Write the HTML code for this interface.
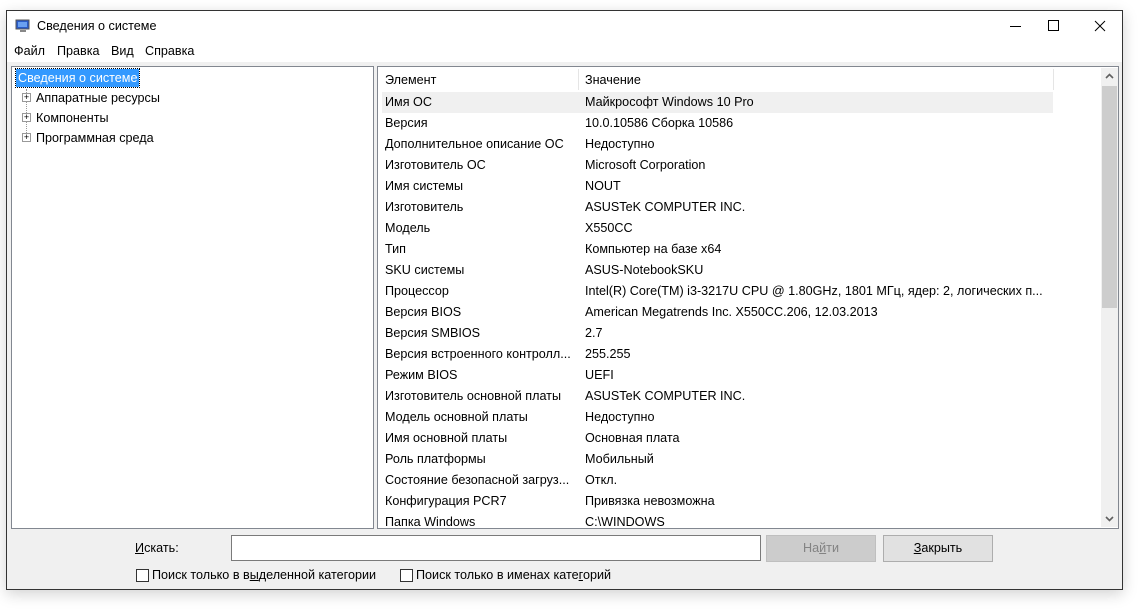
<!DOCTYPE html>
<html><head><meta charset="utf-8"><style>
*{margin:0;padding:0;box-sizing:border-box}
body{width:1144px;height:612px;background:#fff;font-family:"Liberation Sans","DejaVu Sans",sans-serif;font-size:12.6px;color:#000;position:relative;overflow:hidden}
.win{position:absolute;left:6px;top:10px;width:1117px;height:580px;border:1px solid #333;background:#f0f0f0;box-shadow:0 4px 14px rgba(0,0,0,.18)}
.title{position:absolute;left:0;top:0;width:1115px;height:31px;background:#fff}
.menu{position:absolute;left:0;top:31px;width:1115px;height:20px;background:#fff}
.abs{position:absolute;white-space:nowrap}
.lp{position:absolute;left:4px;top:55px;width:363px;height:463px;background:#fff;border:1px solid #828790}
.rp{position:absolute;left:370px;top:55px;width:742px;height:463px;background:#fff;border:1px solid #828790}
.row{position:absolute;left:4px;width:671px;height:21px;line-height:21px}
.row span{position:absolute}
.c1{left:3px}.c2{left:203px}
.u{text-decoration:underline}
.btn{position:absolute;height:27px;line-height:25px;text-align:center;border:1px solid #adadad;background:#e1e1e1}
.cb{position:absolute;width:13px;height:13px;border:1px solid #333;background:#fff}
</style></head><body>
<div class="win">
 <div class="title">
  <svg class="abs" style="left:8px;top:7px" width="16" height="16" viewBox="0 0 16 16"><rect x="1" y="2" width="13" height="9" fill="#2a5bc8" stroke="#555" stroke-width="1"/><rect x="3" y="4" width="9" height="5" fill="#6aa0f0"/><rect x="5" y="12" width="6" height="2" fill="#888"/></svg>
  <div class="abs" style="left:30px;top:8px">Сведения о системе</div>
  <div class="abs" style="left:1003px;top:15px;width:11px;height:1px;background:#000"></div>
  <div class="abs" style="left:1041px;top:9px;width:11px;height:11px;border:1px solid #000"></div>
  <svg class="abs" style="left:1087px;top:9px" width="12" height="12"><path d="M1 1L11 11M11 1L1 11" stroke="#000" stroke-width="1"/></svg>
 </div>
 <div class="menu">
  <div class="abs" style="left:7px;top:2px">Файл</div>
  <div class="abs" style="left:50px;top:2px">Правка</div>
  <div class="abs" style="left:104px;top:2px">Вид</div>
  <div class="abs" style="left:138px;top:2px">Справка</div>
 </div>
 <div class="lp">
  <div class="abs" style="left:4px;top:2px;height:18px;line-height:18px;padding:0 2px;background:#3399ff;color:#fff;outline:1px dotted #000">Сведения о системе</div>
  <div class="abs" style="left:14px;top:22px;width:0;height:50px;border-left:1px dotted #999"></div>
  <div class="abs" style="left:10px;top:26px;width:9px;height:9px;border:1px solid #999;background:#fff;font-size:9px;line-height:7px;text-align:center">+</div>
  <div class="abs" style="left:10px;top:46px;width:9px;height:9px;border:1px solid #999;background:#fff;font-size:9px;line-height:7px;text-align:center">+</div>
  <div class="abs" style="left:10px;top:66px;width:9px;height:9px;border:1px solid #999;background:#fff;font-size:9px;line-height:7px;text-align:center">+</div>
  <div class="abs" style="left:24px;top:24px">Аппаратные ресурсы</div>
  <div class="abs" style="left:24px;top:44px">Компоненты</div>
  <div class="abs" style="left:24px;top:64px">Программная среда</div>
 </div>
 <div class="rp">
  <div class="row" style="top:2px;height:22px;line-height:22px"><span class="c1">Элемент</span><span class="c2">Значение</span></div>
  <div class="abs" style="left:200px;top:2px;width:1px;height:21px;background:#e5e5e5"></div>
  <div class="abs" style="left:675px;top:2px;width:1px;height:21px;background:#e5e5e5"></div>
  <div class="row" style="top:25px;background:#f0f0f0"><span class="c1">Имя ОС</span><span class="c2">Майкрософт Windows 10 Pro</span></div>
  <div class="row" style="top:46px"><span class="c1">Версия</span><span class="c2">10.0.10586 Сборка 10586</span></div>
  <div class="row" style="top:67px"><span class="c1">Дополнительное описание ОС</span><span class="c2">Недоступно</span></div>
  <div class="row" style="top:88px"><span class="c1">Изготовитель ОС</span><span class="c2">Microsoft Corporation</span></div>
  <div class="row" style="top:109px"><span class="c1">Имя системы</span><span class="c2">NOUT</span></div>
  <div class="row" style="top:130px"><span class="c1">Изготовитель</span><span class="c2">ASUSTeK COMPUTER INC.</span></div>
  <div class="row" style="top:151px"><span class="c1">Модель</span><span class="c2">X550CC</span></div>
  <div class="row" style="top:172px"><span class="c1">Тип</span><span class="c2">Компьютер на базе x64</span></div>
  <div class="row" style="top:193px"><span class="c1">SKU системы</span><span class="c2">ASUS-NotebookSKU</span></div>
  <div class="row" style="top:214px"><span class="c1">Процессор</span><span class="c2">Intel(R) Core(TM) i3-3217U CPU @ 1.80GHz, 1801 МГц, ядер: 2, логических п...</span></div>
  <div class="row" style="top:235px"><span class="c1">Версия BIOS</span><span class="c2">American Megatrends Inc. X550CC.206, 12.03.2013</span></div>
  <div class="row" style="top:256px"><span class="c1">Версия SMBIOS</span><span class="c2">2.7</span></div>
  <div class="row" style="top:277px"><span class="c1">Версия встроенного контролл...</span><span class="c2">255.255</span></div>
  <div class="row" style="top:298px"><span class="c1">Режим BIOS</span><span class="c2">UEFI</span></div>
  <div class="row" style="top:319px"><span class="c1">Изготовитель основной платы</span><span class="c2">ASUSTeK COMPUTER INC.</span></div>
  <div class="row" style="top:340px"><span class="c1">Модель основной платы</span><span class="c2">Недоступно</span></div>
  <div class="row" style="top:361px"><span class="c1">Имя основной платы</span><span class="c2">Основная плата</span></div>
  <div class="row" style="top:382px"><span class="c1">Роль платформы</span><span class="c2">Мобильный</span></div>
  <div class="row" style="top:403px"><span class="c1">Состояние безопасной загруз...</span><span class="c2">Откл.</span></div>
  <div class="row" style="top:424px"><span class="c1">Конфигурация PCR7</span><span class="c2">Привязка невозможна</span></div>
  <div class="row" style="top:445px;height:16px;overflow:hidden"><span class="c1">Папка Windows</span><span class="c2">C:\WINDOWS</span></div>
  <div class="abs" style="left:723px;top:1px;width:17px;height:459px;background:#f0f0f0"></div>
  <div class="abs" style="left:724px;top:19px;width:15px;height:222px;background:#cdcdcd"></div>
  <svg class="abs" style="left:727px;top:6px" width="9" height="6"><path d="M1 5L4.5 1.5L8 5" stroke="#606060" stroke-width="1.6" fill="none"/></svg>
  <svg class="abs" style="left:727px;top:449px" width="9" height="6"><path d="M1 1L4.5 4.5L8 1" stroke="#606060" stroke-width="1.6" fill="none"/></svg>
 </div>
 <div class="abs" style="left:128px;top:530px"><span class="u">И</span>скать:</div>
 <div class="abs" style="left:224px;top:524px;width:530px;height:26px;background:#fff;border:1px solid #7a7a7a"></div>
 <div class="btn" style="left:759px;top:524px;width:110px;background:#cccccc;border-color:#bfbfbf;color:#838383">На<span class="u">й</span>ти</div>
 <div class="btn" style="left:876px;top:524px;width:110px"><span class="u">З</span>акрыть</div>
 <div class="cb" style="left:129px;top:558px"></div>
 <div class="abs" style="left:145px;top:557px">Поиск только в в<span class="u">ы</span>деленной категории</div>
 <div class="cb" style="left:393px;top:558px"></div>
 <div class="abs" style="left:409px;top:557px">Поиск только в именах кате<span class="u">г</span>орий</div>
</div>
</body></html>
